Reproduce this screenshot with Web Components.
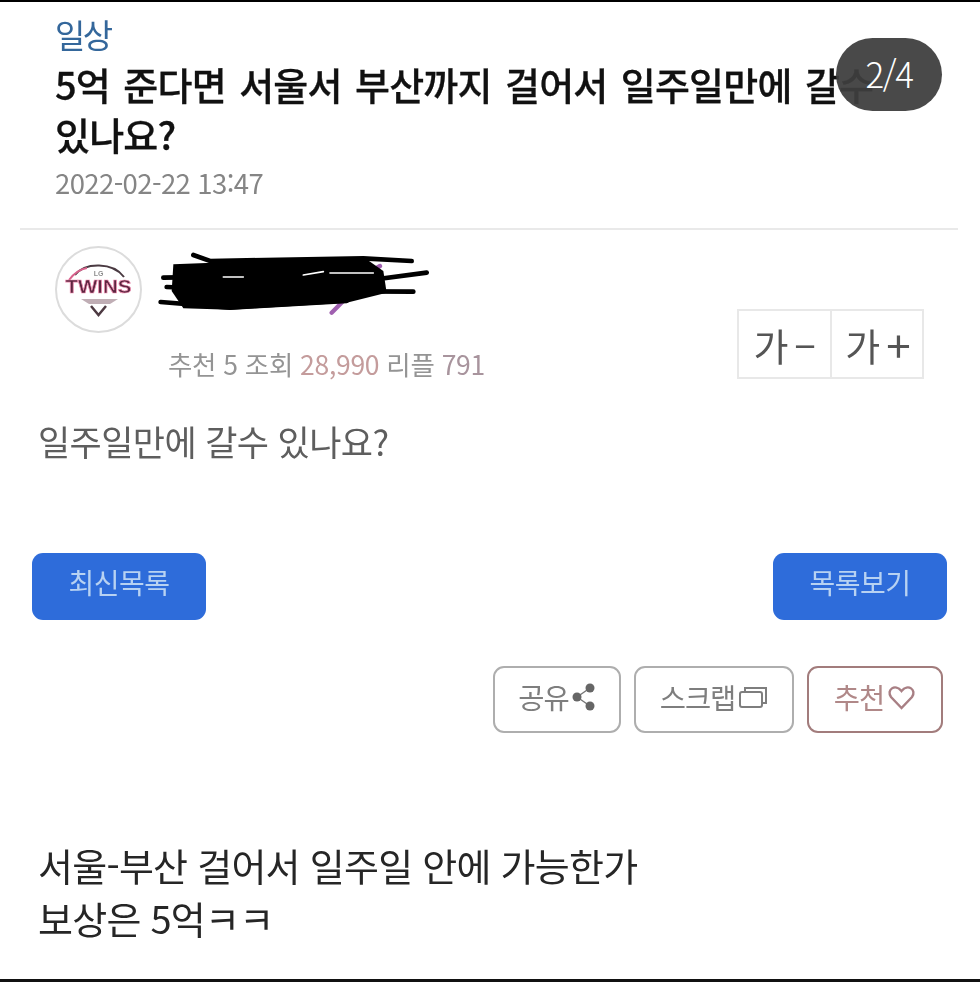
<!DOCTYPE html>
<html lang="ko">
<head>
<meta charset="utf-8">
<title>일상</title>
<style>
  html, body { margin: 0; background: #fff; }
  body { font-family: "Noto Sans CJK KR", "Noto Sans", sans-serif; }
</style>
</head>
<body>
<post-page>
  <post-header category="일상" date="2022-02-22 13:47">5억 준다면 서울서 부산까지 걸어서 일주일만에 갈수 있나요?</post-header>
  <post-author></post-author>
  <post-body>일주일만에 갈수 있나요?</post-body>
  <nav-buttons></nav-buttons>
  <action-buttons></action-buttons>
  <post-caption>서울-부산 걸어서 일주일 안에 가능한가<br>보상은 5억ㅋㅋ</post-caption>
</post-page>
<page-badge>2/4</page-badge>

<script>
const fontStack = '"Noto Sans CJK KR", "Noto Sans", sans-serif';

class PostPage extends HTMLElement {
    constructor() {
        super();
        this.attachShadow({ mode: "open" });
        this.shadowRoot.innerHTML = `
            <style>
                :host {
                    display: flex;
                    flex-direction: column;
                    box-sizing: border-box;
                    height: 982px;
                    border-top: 2px solid #000;
                    border-bottom: 3px solid #111;
                    background: #fff;
                    overflow: hidden;
                }
                .soft { filter: blur(0.7px); display: flex; flex-direction: column; }
            </style>
            <div class="soft"><slot></slot></div>
        `;
    }
}

class PostHeader extends HTMLElement {
    constructor() {
        super();
        this.attachShadow({ mode: "open" });
        this.shadowRoot.innerHTML = `
            <style>
                :host { display: block; font-family: ${fontStack}; margin: 0 22px 0 20px; padding: 14px 0 31px 35px; border-bottom: 2px solid #e9e9e9; }
                .cat { font-size: 33px; line-height: 36px; color: #34679b; letter-spacing: -2.5px; }
                h1 { margin: 7px 0 8px; font-size: 38px; line-height: 50px; font-weight: 500; color: #111; -webkit-text-stroke: 0.3px #111; width: 830px; letter-spacing: -0.8px; word-spacing: 3.5px; word-break: keep-all; }
                .date { font-size: 27.5px; line-height: 30px; color: #858585; letter-spacing: -0.6px; font-variant-ligatures: no-contextual; font-feature-settings: "calt" 0; }
            </style>
            <div class="cat"></div>
            <h1><slot></slot></h1>
            <div class="date"></div>
        `;
        this.shadowRoot.querySelector(".cat").textContent = this.getAttribute("category");
        this.shadowRoot.querySelector(".date").textContent = this.getAttribute("date");
    }
}

class TeamLogo extends HTMLElement {
    constructor() {
        super();
        this.attachShadow({ mode: "open" });
        this.shadowRoot.innerHTML = `
            <style>
                :host { display: block; width: 87px; height: 87px; flex: none; }
                svg { display: block; }
            </style>
            <svg width="87" height="87" viewBox="0 0 87 87">
                <circle cx="43.5" cy="43.5" r="42.5" fill="#fff" stroke="#dcdcdc" stroke-width="2"/>
                <path d="M20 29 C30 16 58 16 69 31" fill="none" stroke="#4a3a42" stroke-width="2"/>
                <path d="M14 34 C20 26 26 23 32 22" fill="none" stroke="#d8628c" stroke-width="2"/>
                <text x="43.5" y="30" font-family="Liberation Sans, sans-serif" font-size="7" font-weight="700" text-anchor="middle" fill="#8f8f8f">LG</text>
                <text x="43.5" y="47" font-family="Liberation Sans, sans-serif" font-size="18" font-weight="700" text-anchor="middle" textLength="66" lengthAdjust="spacingAndGlyphs" fill="#5e2540" stroke="#ec8fb0" stroke-width="0.7">TWINS</text>
                <path d="M26 53 H63 L55 58 H34 Z" fill="#c0aeb5"/>
                <path d="M36 60 L43.5 69 L51 60" fill="none" stroke="#4d3a42" stroke-width="2.5"/>
            </svg>
        `;
    }
}

class RedactScribble extends HTMLElement {
    constructor() {
        super();
        this.attachShadow({ mode: "open" });
        this.shadowRoot.innerHTML = `
            <style>
                :host { display: block; width: 280px; height: 64px; flex: none; }
                svg { display: block; }
            </style>
            <svg width="280" height="64" viewBox="375 50 840 192">
                <path d="M905 235 L945 195 M1015 115 L1050 95" stroke="#a060b0" stroke-width="13" stroke-linecap="round" fill="none"/>
                <path d="M430 90 L1000 68 L1060 110 L1070 175 L950 205 L600 226 L460 222 L425 170 Z" fill="#000"/>
                <g fill="none" stroke="#000" stroke-width="14" stroke-linecap="round">
                    <path d="M490 62 L540 80 L1000 72 L1145 80"/>
                    <path d="M400 130 L700 125 L1000 140 L1190 115"/>
                    <path d="M410 158 L700 170 L1150 172"/>
                    <path d="M392 203 L600 220 L950 200"/>
                </g>
                <path d="M580 128 H640 M820 122 L880 112 M900 116 H1030" stroke="#fff" stroke-width="5" stroke-linecap="round" fill="none"/>
            </svg>
        `;
    }
}

class FontControls extends HTMLElement {
    constructor() {
        super();
        this.attachShadow({ mode: "open" });
        this.shadowRoot.innerHTML = `
            <style>
                :host { display: grid; grid-template-columns: 91px 94px; box-sizing: border-box; width: 187px; height: 70px; border: 2px solid #e8e8e8; font-family: ${fontStack}; }
                div { display: flex; align-items: center; justify-content: center; gap: 6px; font-size: 38px; color: #555; }
                div + div { border-left: 2px solid #e8e8e8; }
                .plus { font-size: 44px; line-height: 1; }
            </style>
            <div>가<span>−</span></div>
            <div>가<span class="plus">+</span></div>
        `;
    }
}

class PostAuthor extends HTMLElement {
    constructor() {
        super();
        this.attachShadow({ mode: "open" });
        this.shadowRoot.innerHTML = `
            <style>
                :host { display: flex; justify-content: space-between; align-items: flex-end; padding: 16px 56px 2px 55px; font-family: ${fontStack}; }
                .who { display: flex; align-items: flex-start; gap: 13px; }
                redact-scribble { margin-top: 5px; }
                .meta { margin: 16px 0 0 113px; font-size: 26.5px; line-height: 30px; color: #949494; white-space: nowrap; letter-spacing: -0.3px; }
                .meta .a { color: #c49c9c; }
                .meta .b { color: #a8949d; }
            </style>
            <div>
                <div class="who"><team-logo></team-logo><redact-scribble></redact-scribble></div>
                <div class="meta">추천 5 조회 <span class="a">28,990</span> 리플 <span class="b">791</span></div>
            </div>
            <font-controls></font-controls>
        `;
    }
}

class PostBody extends HTMLElement {
    constructor() {
        super();
        this.attachShadow({ mode: "open" });
        this.shadowRoot.innerHTML = `
            <style>
                :host { display: block; margin-top: 38px; padding-left: 38px; font-family: ${fontStack}; font-size: 35px; line-height: 44px; color: #5e5e5e; letter-spacing: -0.6px; }
            </style>
            <slot></slot>
        `;
    }
}

class NavButtons extends HTMLElement {
    constructor() {
        super();
        this.attachShadow({ mode: "open" });
        this.shadowRoot.innerHTML = `
            <style>
                :host { display: flex; justify-content: space-between; margin-top: 90px; padding: 0 33px 0 32px; font-family: ${fontStack}; }
                div { display: flex; align-items: center; justify-content: center; width: 174px; height: 67px; box-sizing: border-box; padding-bottom: 10px; border-radius: 11px; background: #2e6cda; color: #b8d2f2; font-size: 28px; letter-spacing: -0.5px; }
            </style>
            <div>최신목록</div>
            <div>목록보기</div>
        `;
    }
}

class ActionButtons extends HTMLElement {
    constructor() {
        super();
        this.attachShadow({ mode: "open" });
        this.shadowRoot.innerHTML = `
            <style>
                :host { display: flex; justify-content: flex-end; gap: 13px; margin-top: 46px; padding-right: 37px; font-family: ${fontStack}; }
                div { display: flex; align-items: center; justify-content: center; gap: 3px; box-sizing: border-box; height: 67px; padding-bottom: 6px; border: 2px solid #aeaeae; border-radius: 11px; color: #7e7e7e; font-size: 28.5px; letter-spacing: -1px; }
                .share { width: 128px; }
                .scrap { width: 160px; }
                .like { width: 136px; border-color: #a27c7c; color: #b08888; }
                svg { display: block; flex: none; }
            </style>
            <div class="share">공유<svg width="24" height="30" viewBox="0 0 24 30">
                <path d="M5 15 L18 6 M5 15 L18 24" stroke="#777" stroke-width="1.5"/>
                <circle cx="5" cy="15" r="4.5" fill="#666"/><circle cx="18" cy="6" r="4.5" fill="#666"/><circle cx="18" cy="24" r="4.5" fill="#666"/>
            </svg></div>
            <div class="scrap">스크랩<svg width="30" height="26" viewBox="0 0 30 26" fill="none" stroke="#7e7e7e" stroke-width="2">
                <rect x="2" y="8" width="22" height="15" rx="2"/>
                <path d="M7 8 V4 H28 V19 H24"/>
            </svg></div>
            <div class="like">추천<svg width="29" height="26" viewBox="0 0 29 26" fill="none" stroke="#a87f84" stroke-width="2.4">
                <path d="M14.5 24 L4 13 C-1 6 8 -1 14.5 7 C21 -1 30 6 25 13 Z"/>
            </svg></div>
        `;
    }
}

class PostCaption extends HTMLElement {
    constructor() {
        super();
        this.attachShadow({ mode: "open" });
        this.shadowRoot.innerHTML = `
            <style>
                :host { display: block; margin-top: 105px; padding-left: 38px; font-family: ${fontStack}; font-size: 38px; line-height: 53px; color: #262626; letter-spacing: -0.75px; }
            </style>
            <slot></slot>
        `;
    }
}

class PageBadge extends HTMLElement {
    constructor() {
        super();
        this.attachShadow({ mode: "open" });
        this.shadowRoot.innerHTML = `
            <style>
                :host { position: absolute; left: 836px; top: 38px; width: 106px; height: 73px; display: flex; align-items: center; justify-content: center; border-radius: 37px; background: rgba(62, 62, 62, 0.94); color: #fff; font-family: ${fontStack}; font-size: 35px; font-weight: 300; letter-spacing: -1.5px; padding-bottom: 4px; box-sizing: border-box; }
            </style>
            <slot></slot>
        `;
    }
}

customElements.define("post-page", PostPage);
customElements.define("post-header", PostHeader);
customElements.define("team-logo", TeamLogo);
customElements.define("redact-scribble", RedactScribble);
customElements.define("font-controls", FontControls);
customElements.define("post-author", PostAuthor);
customElements.define("post-body", PostBody);
customElements.define("nav-buttons", NavButtons);
customElements.define("action-buttons", ActionButtons);
customElements.define("post-caption", PostCaption);
customElements.define("page-badge", PageBadge);
</script>
</body>
</html>
